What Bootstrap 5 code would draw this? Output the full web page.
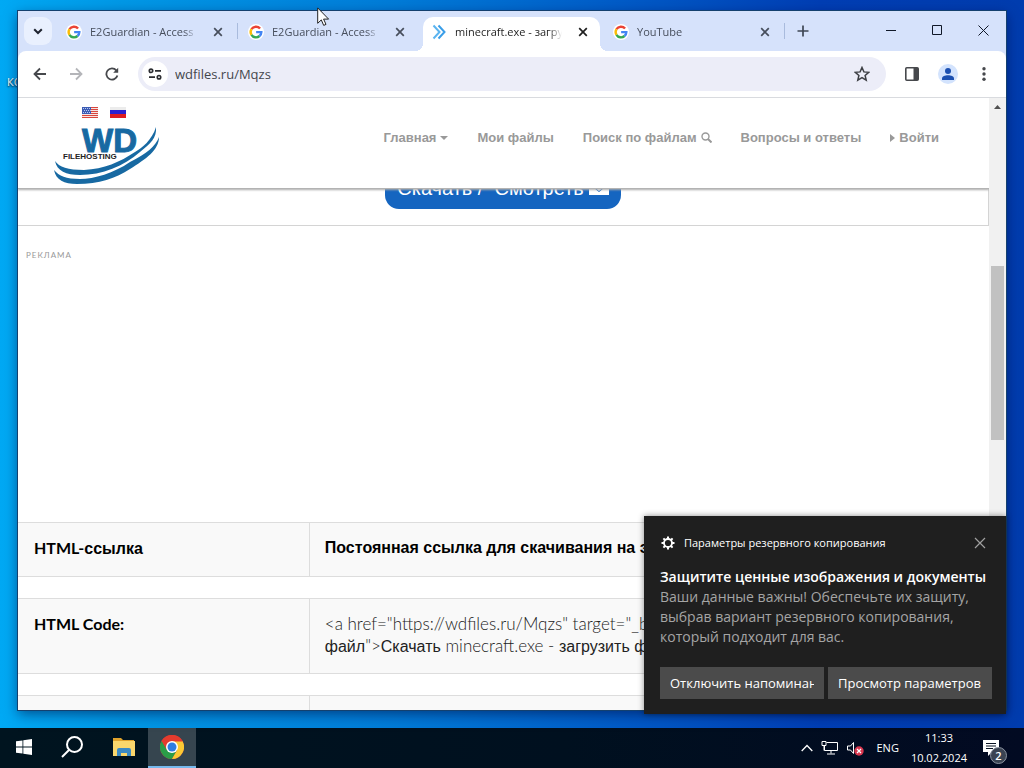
<!DOCTYPE html>
<html lang="ru">
<head>
<meta charset="utf-8">
<meta name="viewport" content="width=device-width, initial-scale=1">
<title>minecraft.exe - загрузить файл</title>
<link rel="stylesheet" href="https://cdn.jsdelivr.net/npm/bootstrap@5.3.0/dist/css/bootstrap.min.css">
<style>
  :root { --ui: "Open Sans", "Noto Sans", sans-serif; --site: "Liberation Sans", Arial, sans-serif; }
  body { font-family: var(--ui); font-size: 11px; line-height: 16px; color: #1f1f1f; }
  button { border: 0; background: none; padding: 0; color: inherit; }
  svg { display: block; flex: none; }

  .desktop { background: linear-gradient(90deg, #00a9f4 0, #0098e6 12%, #007cd8 38%, #005cc8 60%, #003eb4 80%, #003cae 100%); }
  .workspace { padding: 11px 18px 18px; min-height: 0; }
  .desk-label { position: absolute; left: 7px; top: 74px; color: #fff; text-shadow: 0 1px 2px #000; }
  .pointer { position: absolute; left: 31%; top: 7px; z-index: 30; }
  .browser { background: #fff; box-shadow: 0 0 0 1px #14406e, 0 4px 12px rgba(0, 10, 60, .55); min-height: 0; position: relative; }

  .tabstrip { background: #d6e2fb; height: 40px; padding-left: 6px; flex: none; }
  .tab-search { width: 28px; height: 28px; border-radius: 9px; background: #e9f0fe; margin-right: 4px; }
  .tab-item { flex: 0 1 182px; min-width: 0; height: 34px; padding: 0 11px 4px 10px; position: relative; color: #474e5c; }
  .tab-item.current { background: #fff; color: #1f1f1f; border-radius: 10px 10px 0 0; margin: 0 3px; padding-left: 8px; padding-right: 8px; flex-basis: 177px; }
  .tab-item.current::before, .tab-item.current::after { content: ""; position: absolute; bottom: 0; width: 8px; height: 8px; }
  .tab-item.current::before { left: -8px; background: radial-gradient(circle at 0 0, transparent 8px, #fff 8px); }
  .tab-item.current::after { right: -8px; background: radial-gradient(circle at 100% 0, transparent 8px, #fff 8px); }
  .tab-item.divided::after { content: ""; position: absolute; right: 0; top: 6px; width: 1px; height: 16px; background: #a9bbdd; }
  .tab-title { overflow: hidden; white-space: nowrap; -webkit-mask-image: linear-gradient(90deg, #000 88%, transparent); mask-image: linear-gradient(90deg, #000 88%, transparent); }
  .tab-close { margin-left: 12px; }
  .caption-btn { width: 46px; height: 38px; color: #101828; }

  .toolbar-wrap { background: #d6e2fb; flex: none; }
  .toolbar { background: #fff; height: 46px; border-radius: 8px 8px 0 0; padding: 0 4px; }
  .tool-btn { width: 36px; height: 34px; color: #46484c; flex: none; }
  .omnibox { height: 34px; border-radius: 17px; background: #ecedf8; margin: 0 8px; padding: 0 12px 0 4px; }
  .site-info { width: 26px; height: 26px; border-radius: 50%; background: #fff; }
  .url-input { border: 0; background: none; outline: 0; padding: 0; margin-left: 7px; min-width: 0; font-size: 13px; color: #44474d; }
  .viewport { border-top: 1px solid #d9dbdf; min-height: 0; overflow: hidden; }

  .site { font-family: var(--site); min-width: 0; overflow: hidden; }
  .site-head { height: 91px; border-bottom: 1px solid #b3b3b3; box-shadow: 0 1px 2px #aaa; position: relative; z-index: 2; padding: 9px 50px 0 36px; flex: none; background: #fff; }
  .site-nav { gap: 29px; font-size: 13px; font-weight: 700; padding-bottom: 20px; }
  .site-nav a { color: #999; text-decoration: none; white-space: nowrap; }
  .flags { padding-left: 28px; }
  .download-row { height: 37px; overflow: hidden; border: solid #d4d4d4; border-width: 0 1px 1px 0; padding-bottom: 16px; flex: none; }
  .download-btn { background: #1565c0; color: #fff; border-radius: 14px; height: 44px; font-size: 20px; padding: 2px 12px 0; gap: 5px; flex: none; white-space: nowrap; }
  .ad-slot { height: 296px; padding: 21px 8px; font-family: Lato, sans-serif; font-size: 8px; letter-spacing: 1px; color: #999; flex: none; }
  .code-table { width: 100%; table-layout: fixed; margin-bottom: 21px; font-family: Lato, var(--site); font-size: 16px; line-height: 22px; background: #f9f9f9; color: #000; border: solid #ddd; border-width: 1px 0; flex: none; }
  .code-table th, .code-table td { padding: 14px 15px; vertical-align: top; }
  .code-table th { font-weight: 700; width: 30%; padding-left: 16px; border-right: 1px solid #ddd; }
  .code-table .headline { font-family: var(--site); font-weight: 700; white-space: nowrap; overflow: hidden; }
  .code-table .snippet { font-weight: 300; font-size: 17px; color: #222; }
  .cyr { font-family: var(--site); font-size: 16px; }
  .short-row th, .short-row td { height: 54px; }
  .tall-row th, .tall-row td { height: 75px; }

  .scroll-track { width: 17px; background: #f1f1f1; flex: none; }
  .scroll-thumb { background: #c1c1c1; margin: 0 2px; }

  .notice { position: absolute; right: 18px; bottom: 54px; width: 362px; background: #1f1f1f; padding: 17px 14px 15px 16px; z-index: 20; box-shadow: 0 0 6px rgba(0,0,0,.45); color: #fff; }
  .notice-head { margin-bottom: 14px; padding-right: 2px; }
  .notice-text { font-size: 14px; line-height: 20px; color: #a5a5a5; }
  .notice-title { font-size: 14px; line-height: 20px; font-weight: 600; }
  .notice-btn { background: #4b4b4b; height: 32px; font-size: 13px; flex: 1 1 0; min-width: 0; padding: 0 10px; text-align: left; }
  .notice-btn span { display: block; overflow: hidden; white-space: nowrap; }

  .taskbar { height: 40px; background: linear-gradient(90deg, #00141f, #00101f 55%, #020a22); color: #fff; flex: none; }
  .task-btn { width: 48px; height: 40px; border-bottom: 2px solid transparent; flex: none; }
  .task-btn.running { background: #36454f; border-color: #76b9ed; }
  .count { position: absolute; left: 7px; top: 7px; width: 17px; height: 17px; border-radius: 50%; background: #3a4352; border: 1px solid #8b93a0; line-height: 15px; font-weight: 600; }
</style>
</head>
<body>
<svg width="0" height="0" class="position-absolute" aria-hidden="true">
  <symbol id="g-logo" viewBox="0 0 24 24">
    <circle cx="12" cy="12" r="12" fill="#fff"/>
    <g fill="none" stroke-width="3.6">
      <path d="M18.1 6.9A8 8 0 0 0 5.2 7.8" stroke="#ea4335"/>
      <path d="M5.2 7.8A8 8 0 0 0 5.2 16.2" stroke="#fbbc05"/>
      <path d="M5.2 16.2A8 8 0 0 0 17.3 18" stroke="#34a853"/>
      <path d="M17.3 18A8 8 0 0 0 20 12.2H12.2" stroke="#4285f4"/>
    </g>
  </symbol>
  <symbol id="cross" viewBox="0 0 10 10"><path d="M1.2 1.2l7.6 7.6M8.8 1.2L1.2 8.8" stroke="currentColor" stroke-width="1.7"/></symbol>
</svg>

<div class="desktop vh-100 d-flex flex-column position-relative overflow-hidden">
  <span class="desk-label">КС</span>
  <svg class="pointer" width="13" height="20" viewBox="0 0 13 20"><path d="M.7.9v15.4l3.6-3.4 2.4 5.5 2.3-1-2.4-5.3h5z" fill="#fff" stroke="#222" stroke-width="1"/></svg>

  <div class="workspace d-flex flex-column flex-grow-1">
    <main class="browser d-flex flex-column flex-grow-1">
      <div class="tabstrip d-flex align-items-end">
        <button class="tab-search d-flex align-items-center justify-content-center align-self-center" aria-label="Поиск вкладок"><svg width="10" height="7" viewBox="0 0 10 7"><path d="M1.2 1.2L5 5l3.8-3.8" fill="none" stroke="#1f2430" stroke-width="2"/></svg></button>
        <div class="tab-item divided d-flex align-items-center">
          <svg class="me-2" width="16" height="16"><use href="#g-logo"/></svg>
          <span class="tab-title flex-grow-1">E2Guardian - Access</span>
          <button class="tab-close p-1" aria-label="Закрыть"><svg width="10" height="10"><use href="#cross"/></svg></button>
        </div>
        <div class="tab-item d-flex align-items-center">
          <svg class="me-2" width="16" height="16"><use href="#g-logo"/></svg>
          <span class="tab-title flex-grow-1">E2Guardian - Access</span>
          <button class="tab-close p-1" aria-label="Закрыть"><svg width="10" height="10"><use href="#cross"/></svg></button>
        </div>
        <div class="tab-item current d-flex align-items-center">
          <svg class="me-2" width="16" height="16" viewBox="0 0 16 16" fill="none" stroke-width="2"><path d="M2.5 1.5L8.500 8l-6 6.500" stroke="#5ab4f0"/><path d="M7.500 1.500L13.500 8l-6 6.500" stroke="#3a9ee8"/></svg>
          <span class="tab-title flex-grow-1">minecraft.exe - загру</span>
          <button class="tab-close p-1" aria-label="Закрыть"><svg width="10" height="10"><use href="#cross"/></svg></button>
        </div>
        <div class="tab-item divided d-flex align-items-center">
          <svg class="me-2" width="16" height="16"><use href="#g-logo"/></svg>
          <span class="tab-title flex-grow-1">YouTube</span>
          <button class="tab-close p-1" aria-label="Закрыть"><svg width="10" height="10"><use href="#cross"/></svg></button>
        </div>
        <button class="align-self-center ms-1 px-2" aria-label="Новая вкладка"><svg width="12" height="12" viewBox="0 0 12 12"><path d="M6 .5v11M.5 6h11" stroke="#3f4754" stroke-width="1.700"/></svg></button>
        <div class="d-flex ms-auto align-self-start">
          <button class="caption-btn d-flex align-items-center justify-content-center" aria-label="Свернуть"><svg width="10" height="10" viewBox="0 0 10 10"><path d="M0 5.500h10" stroke="currentColor"/></svg></button>
          <button class="caption-btn d-flex align-items-center justify-content-center" aria-label="Развернуть"><svg width="10" height="10" viewBox="0 0 10 10"><path d="M.5.5h9v9h-9z" fill="none" stroke="currentColor"/></svg></button>
          <button class="caption-btn d-flex align-items-center justify-content-center" aria-label="Закрыть окно"><svg width="11" height="11" viewBox="0 0 11 11"><path d="M.5.500l10 10M10.500.5l-10 10" stroke="currentColor"/></svg></button>
        </div>
      </div>

      <div class="toolbar-wrap">
        <div class="toolbar d-flex align-items-center">
          <button class="tool-btn d-flex align-items-center justify-content-center" aria-label="Назад"><svg width="14" height="14" viewBox="0 0 14 14"><path d="M13 7H2M7 1.500L1.500 7 7 12.500" fill="none" stroke="currentColor" stroke-width="1.800"/></svg></button>
          <button class="tool-btn d-flex align-items-center justify-content-center" aria-label="Вперёд"><svg width="14" height="14" viewBox="0 0 14 14"><path d="M1 7h11M7 1.500L12.500 7 7 12.500" fill="none" stroke="#b4b5b9" stroke-width="1.800"/></svg></button>
          <button class="tool-btn d-flex align-items-center justify-content-center" aria-label="Обновить"><svg width="14" height="14" viewBox="0 0 14 14"><path d="M12.400 8.500A5.600 5.600 0 1 1 11.300 3.400L12.500 4.600" fill="none" stroke="currentColor" stroke-width="1.800"/><path d="M13.200.8v5H8.200z" fill="currentColor"/></svg></button>
          <div class="omnibox d-flex align-items-center flex-grow-1">
            <button class="site-info d-flex align-items-center justify-content-center" aria-label="Сведения о сайте"><svg width="14" height="12" viewBox="0 0 14 12" fill="none" stroke="#2b2d31" stroke-width="1.700"><circle cx="3" cy="2.800" r="1.700"/><path d="M7 2.800h6M1 9.200h6"/><circle cx="11" cy="9.200" r="1.700"/></svg></button>
            <input class="url-input flex-grow-1" type="text" value="wdfiles.ru/Mqzs" aria-label="Адресная строка">
            <button class="p-1" aria-label="В закладки"><svg width="16" height="16" viewBox="0 0 16 16"><path d="M8 1.500l1.900 4.400 4.800.4-3.600 3.200 1.100 4.700L8 11.700l-4.200 2.500 1.100-4.700L1.300 6.300l4.800-.4z" fill="none" stroke="#3d3f44" stroke-width="1.500"/></svg></button>
          </div>
          <button class="tool-btn d-flex align-items-center justify-content-center" aria-label="Боковая панель"><svg width="14" height="14" viewBox="0 0 14 14"><rect x=".8" y=".8" width="12.400" height="12.400" rx="1" fill="none" stroke="currentColor" stroke-width="1.600"/><path d="M8.500 1h4.500v12H8.500z" fill="currentColor"/></svg></button>
          <button class="tool-btn d-flex align-items-center justify-content-center" aria-label="Профиль"><svg width="20" height="20" viewBox="0 0 20 20"><circle cx="10" cy="10" r="10" fill="#d3e3fd"/><circle cx="10" cy="7" r="3" fill="#1b4fb0"/><path d="M4 16v-1.500c0-2.200 3-3.300 6-3.300s6 1.100 6 3.300V16z" fill="#1b4fb0"/></svg></button>
          <button class="tool-btn d-flex align-items-center justify-content-center" aria-label="Меню"><svg width="4" height="14" viewBox="0 0 4 14" fill="currentColor"><circle cx="2" cy="1.800" r="1.700"/><circle cx="2" cy="7" r="1.700"/><circle cx="2" cy="12.200" r="1.700"/></svg></button>
        </div>
      </div>

      <div class="viewport d-flex flex-grow-1">
        <div class="site d-flex flex-column flex-grow-1">
          <header class="site-head d-flex align-items-start justify-content-between">
            <div>
              <div class="flags d-flex">
                <a class="me-2 pe-1" href="#en" aria-label="English"><svg width="16" height="11" viewBox="0 0 16 11"><path fill="#f6e4e2" d="M0 0h16v11H0z"/><path d="M0 .5h16M0 2.500h16M0 4.500h16M0 6.500h16M0 8.500h16M0 10.500h16" stroke="#d8453c"/><path fill="#3c5cb4" d="M0 0h9v7H0z"/><path d="M1 1.500h8M2 3.500h7M1 5.500h8" stroke="#b9c8f0" stroke-dasharray="1 1"/></svg></a>
                <a href="#ru" aria-label="Русский"><svg width="16" height="11" viewBox="0 0 16 11"><path fill="#ececec" d="M0 0h16v4H0z"/><path fill="#2a20d0" d="M0 3h16v5H0z"/><path fill="#dd1c22" d="M0 7h16v4H0z"/></svg></a>
              </div>
              <a href="#home" aria-label="WD Filehosting"><svg width="106" height="68" viewBox="0 0 106 68">
                <text x="28" y="34" font-family="Liberation Sans, sans-serif" font-weight="700" font-size="33" fill="#1769a2" stroke="#1769a2" stroke-width="1">WD</text>
                <text x="9" y="41" font-family="Liberation Sans, sans-serif" font-weight="700" font-size="8" fill="#222">FILEHOSTING</text>
                <path d="M1 43C3 53 12 57 26 57C48 57 70 48 86 34C96 26 103 20 102 9C98 22 88 30 81 34C66 44 50 51 30 52C14 52 5 49 1 43z" fill="#1769a2"/>
                <path d="M0 52C2 62 10 66 23 66C45 66 62 60 76 51C92 41 105 32 105 19C102 28 92 36 76 44C60 55 40 61 26 61C12 61 5 58 0 52z" fill="#1769a2"/>
              </svg></a>
            </div>
            <nav class="site-nav d-flex align-self-center" aria-label="Меню сайта">
              <a href="#main" class="d-flex align-items-center">Главная<svg class="ms-1" width="8" height="4" viewBox="0 0 8 4"><path d="M0 0h8L4 4z" fill="#999"/></svg></a>
              <a href="#files">Мои файлы</a>
              <a href="#search" class="d-flex align-items-center">Поиск по файлам<svg class="ms-1" width="11" height="11" viewBox="0 0 11 11" fill="none" stroke="#999" stroke-width="1.400"><circle cx="4.500" cy="4.500" r="3.500"/><path d="M7 7l3.500 3.500" stroke-width="2"/></svg></a>
              <a href="#faq">Вопросы и ответы</a>
              <a href="#login" class="d-flex align-items-center"><svg class="me-1" width="5" height="8" viewBox="0 0 5 8"><path d="M0 0l5 4-5 4z" fill="#999"/></svg>Войти</a>
            </nav>
          </header>

          <div class="download-row d-flex justify-content-center align-items-end">
            <button class="download-btn d-flex align-items-center">Скачать /&nbsp; Смотреть<svg width="20" height="16" viewBox="0 0 20 16"><path fill="#fff" d="M7 0h6v5h4l-7 6-7-6h4zM0 8h5l5 4 5-4h5v7H0z"/></svg></button>
          </div>

          <div class="ad-slot">РЕКЛАМА</div>

          <table class="code-table">
            <tr class="short-row"><th scope="row">HTML-<span class="cyr">ссылка</span></th><td class="headline">Постоянная ссылка для скачивания на этот</td></tr>
          </table>
          <table class="code-table">
            <tr class="tall-row"><th scope="row">HTML Code:</th><td class="snippet">&lt;a href="https://wdfiles.ru/Mqzs" target="_bl<br><span class="cyr">файл</span>"&gt;<span class="cyr">Скачать</span> minecraft.exe - <span class="cyr">загрузить фа</span></td></tr>
          </table>
          <table class="code-table">
            <tr class="short-row"><th scope="row"></th><td></td></tr>
          </table>
        </div>
        <div class="scroll-track d-flex flex-column" aria-hidden="true">
          <svg class="mx-auto mt-1" width="7" height="12" viewBox="0 0 7 12"><path d="M0 7l3.500-4L7 7z" fill="#505050"/></svg>
          <div style="flex-grow:152"></div>
          <div class="scroll-thumb" style="flex-grow:174"></div>
          <div style="flex-grow:270"></div>
        </div>
      </div>
    </main>
  </div>

  <aside class="notice" role="alert">
    <div class="notice-head d-flex align-items-center">
      <svg class="me-2" width="16" height="16" viewBox="0 0 16 16" fill="none" stroke="#fff"><circle cx="8" cy="8" r="4" stroke-width="1.800"/><path d="M8 1.500V4M8 12v2.500M1.500 8H4M12 8h2.500M3.400 3.400l1.800 1.800M10.800 10.800l1.800 1.800M12.600 3.400l-1.800 1.800M5.200 10.800l-1.800 1.800" stroke-width="2"/></svg>
      <span>Параметры резервного копирования</span>
      <button class="ms-auto p-1" aria-label="Закрыть уведомление"><svg width="12" height="12" viewBox="0 0 12 12"><path d="M1 1l10 10M11 1L1 11" stroke="#a0a0a0" stroke-width="1.200"/></svg></button>
    </div>
    <div class="notice-title text-nowrap">Защитите ценные изображения и документы</div>
    <div class="notice-text">Ваши данные важны! Обеспечьте их защиту, выбрав вариант резервного копирования, который подходит для вас.</div>
    <div class="d-flex gap-1 mt-3 pt-1">
      <button class="notice-btn"><span>Отключить напоминан</span></button>
      <button class="notice-btn"><span>Просмотр параметров</span></button>
    </div>
  </aside>

  <footer class="taskbar d-flex align-items-center">
    <button class="task-btn d-flex align-items-center justify-content-center" aria-label="Пуск"><svg width="16" height="16" viewBox="0 0 16 16" fill="#fff"><path d="M0 2.300l6.500-.9v6.200H0zM7.300 1.300L16 0v7.600H7.300zM0 8.400h6.500v6.200L0 13.700zM7.300 8.400H16V16l-8.700-1.300z"/></svg></button>
    <button class="task-btn d-flex align-items-center justify-content-center" aria-label="Поиск"><svg width="22" height="22" viewBox="0 0 22 22" fill="none" stroke="#fff" stroke-width="2"><circle cx="13.500" cy="8.500" r="7.500"/><path d="M8 14l-7 7"/></svg></button>
    <button class="task-btn d-flex align-items-center justify-content-center ms-1" aria-label="Проводник"><svg width="22" height="18" viewBox="0 0 22 18"><path d="M0 0h8l2 2h11v4H0z" fill="#e0a32c"/><path d="M0 3h22v15H0z" fill="#fad76c"/><path d="M4 18v-6q0-2 2-2h10q2 0 2 2v6h-4v-3H8v3z" fill="#3b8ac4"/></svg></button>
    <button class="task-btn running d-flex align-items-center justify-content-center" aria-label="Google Chrome"><svg width="24" height="24" viewBox="0 0 24 24"><circle cx="12" cy="12" r="12" fill="#ea4335"/><path d="M1.600 6A12 12 0 0 0 12 24l5.200-9L12 12z" fill="#2a9d48"/><path d="M22.400 6A12 12 0 0 1 12 24l5.200-9L12 6z" fill="#fcc934"/><path d="M1.600 6L6.800 15 12 6.500h10.700A12 12 0 0 0 1.600 6z" fill="#e33b2e"/><circle cx="12" cy="12" r="6" fill="#fff"/><circle cx="12" cy="12" r="4.500" fill="#2f7de1"/></svg></button>
    <div class="d-flex align-items-center ms-auto">
      <button aria-label="Скрытые значки"><svg width="12" height="8" viewBox="0 0 12 8"><path d="M.7 7L6 1.500 11.300 7" fill="none" stroke="#fff" stroke-width="1.300"/></svg></button>
      <svg class="ms-2 me-2" width="18" height="14" viewBox="0 0 18 14" fill="none" stroke="#fff"><path d="M5.500 1.500h11v8h-13V5M10 9.500v3M6 13h8"/><path d="M1 .500h4v4H1zM3 4.500v5"/></svg>
      <svg width="17" height="15" viewBox="0 0 17 15"><path d="M.5 5h3L6.500 1.500v11L3.500 9h-3z" fill="none" stroke="#fff"/><circle cx="12" cy="10" r="4.700" fill="#d8364e"/><path d="M10 8l4 4M14 8l-4 4" stroke="#fff" stroke-width="1.200"/></svg>
      <span class="mx-2 ps-1">ENG</span>
      <div class="text-center ms-1"><div>11:33</div><div class="pt-1">10.02.2024</div></div>
      <button class="position-relative ms-3 me-4" aria-label="Уведомления"><svg width="17" height="17" viewBox="0 0 17 17"><path d="M0 0h16v12H9l-4 4v-4H0z" fill="#fff"/><path d="M3 3.500h10M3 6h10M3 8.500h7" stroke="#0a1424"/></svg><span class="count">2</span></button>
    </div>
  </footer>
</div>
<script src="https://cdn.jsdelivr.net/npm/bootstrap@5.3.0/dist/js/bootstrap.bundle.min.js"></script>
</body>
</html>
